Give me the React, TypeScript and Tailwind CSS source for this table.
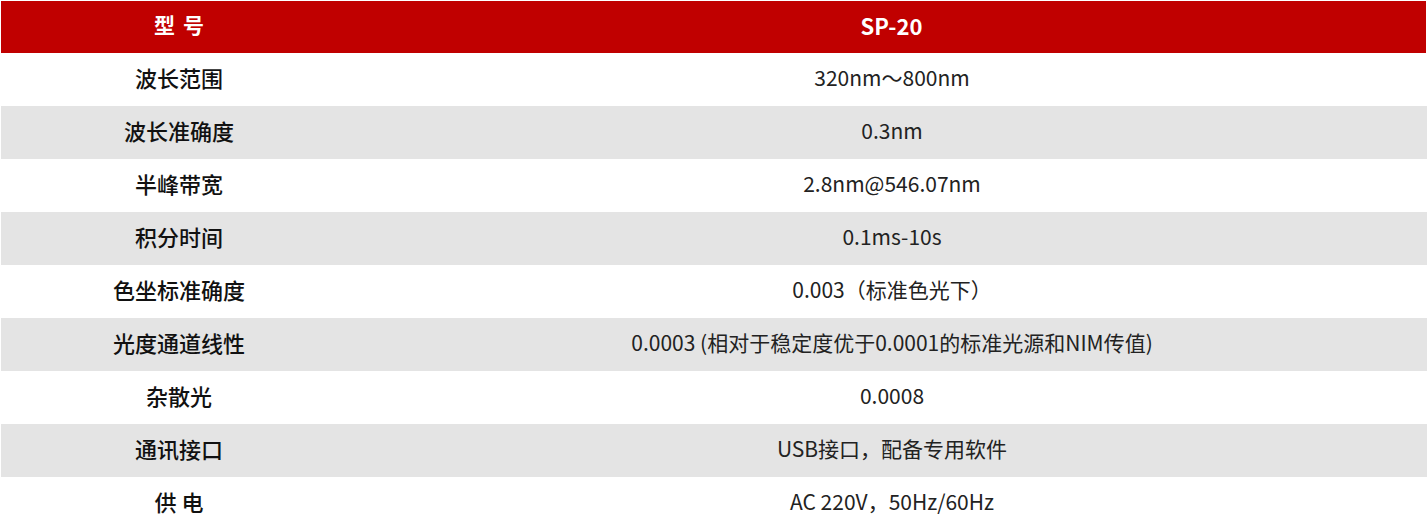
import React from "react";

const rows: [string, string][] = [
  ["波长范围", "320nm～800nm"],
  ["波长准确度", "0.3nm"],
  ["半峰带宽", "2.8nm@546.07nm"],
  ["积分时间", "0.1ms-10s"],
  ["色坐标准确度", "0.003（标准色光下）"],
  ["光度通道线性", "0.0003 (相对于稳定度优于0.0001的标准光源和NIM传值)"],
  ["杂散光", "0.0008"],
  ["通讯接口", "USB接口，配备专用软件"],
  ["供 电", "AC 220V，50Hz/60Hz"],
];

export default function App() {
  return (
    <div
      className="w-[1427px] h-[531px] bg-white pt-px pl-px"
      style={{ fontFamily: '"Noto Sans CJK SC", "Noto Sans", sans-serif' }}
    >
      <div className="flex h-[52px] w-[1425px] bg-[#c00000] text-white font-bold">
        <div className="w-[356px] flex items-center justify-center gap-[8px] text-[21px] pb-[4px]">
          <span>型</span>
          <span>号</span>
        </div>
        <div className="flex-1 flex items-center justify-center text-[22px] pb-[4px]">SP-20</div>
      </div>
      {rows.map(([k, v], i) => (
        <div
          key={k}
          className={`flex h-[53px] w-[1426px] ${i % 2 === 1 ? "bg-[#e4e4e4]" : "bg-white"}`}
        >
          <div className="w-[356px] flex items-center justify-center text-[22px] font-medium text-[#111] pb-[4px]">
            {k}
          </div>
          <div className="flex-1 flex items-center justify-center text-[21px] text-[#222] pb-[4px]">
            {v}
          </div>
        </div>
      ))}
    </div>
  );
}
